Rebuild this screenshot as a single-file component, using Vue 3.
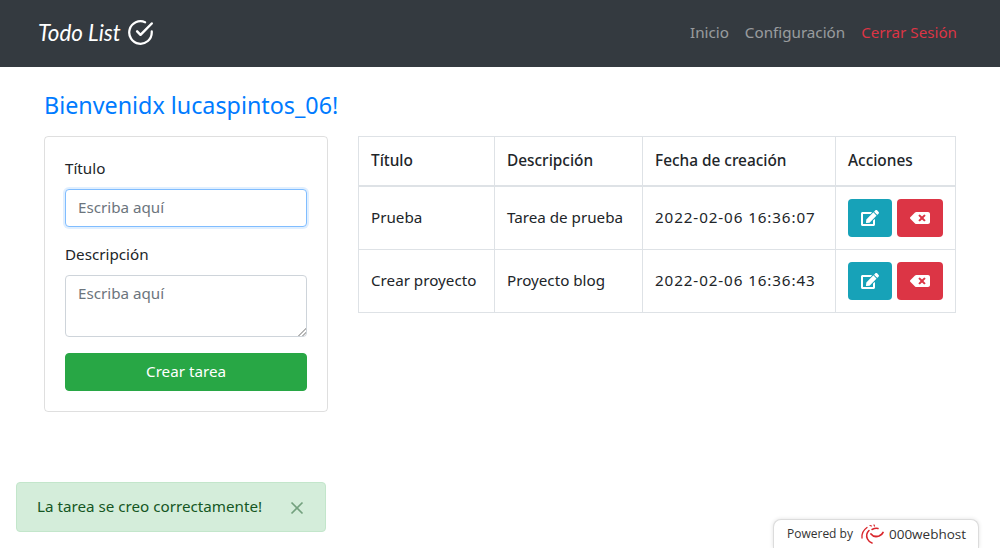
<script setup>
import { ref } from 'vue'

const tasks = ref([
  { id: 1, title: 'Prueba', description: 'Tarea de prueba', created: '2022-02-06 16:36:07' },
  { id: 2, title: 'Crear proyecto', description: 'Proyecto blog', created: '2022-02-06 16:36:43' },
])
const showToast = ref(true)
</script>

<template>
  <div class="page">
    <nav class="navbar">
      <a class="brand" href="#">
        <span class="brand-text">Todo List</span>
        <svg class="brand-icon" viewBox="0 0 24 24" fill="none" aria-hidden="true">
          <path d="M22 11.08V12a10 10 0 1 1-5.93-9.14" stroke="currentColor" stroke-width="2" stroke-linecap="round" stroke-linejoin="round" />
          <path d="M22 4 12 14.01l-3-3" stroke="currentColor" stroke-width="2.2" stroke-linecap="round" stroke-linejoin="round" />
        </svg>
      </a>
      <ul class="nav-links">
        <li><a href="#">Inicio</a></li>
        <li><a href="#">Configuración</a></li>
        <li><a class="logout" href="#">Cerrar Sesión</a></li>
      </ul>
    </nav>

    <main class="content">
      <h4 class="welcome">Bienvenidx lucaspintos_06!</h4>
      <div class="columns">
        <form class="card" @submit.prevent>
          <label for="title">Título</label>
          <input id="title" class="field focused" type="text" placeholder="Escriba aquí" />
          <label for="description">Descripción</label>
          <textarea id="description" class="field area" placeholder="Escriba aquí"></textarea>
          <button class="btn-create" type="submit">Crear tarea</button>
        </form>

        <table class="tasks">
          <thead>
            <tr>
              <th class="col-title">Título</th>
              <th class="col-desc">Descripción</th>
              <th class="col-date">Fecha de creación</th>
              <th>Acciones</th>
            </tr>
          </thead>
          <tbody>
            <tr v-for="task in tasks" :key="task.id">
              <td>{{ task.title }}</td>
              <td>{{ task.description }}</td>
              <td class="date">{{ task.created }}</td>
              <td class="action-cell">
                <div class="actions">
                  <button class="btn-icon edit" type="button" aria-label="Editar">
                    <svg viewBox="0 0 576 512" aria-hidden="true">
                      <path fill="currentColor" d="M402.6 83.2l90.2 90.2c3.8 3.8 3.8 10 0 13.8L274.4 405.6l-92.8 10.3c-12.4 1.4-22.9-9.1-21.5-21.5l10.3-92.8L388.8 83.2c3.8-3.8 10-3.8 13.8 0zm162-22.9l-48.8-48.8c-15.2-15.2-39.9-15.2-55.2 0l-35.4 35.4c-3.8 3.8-3.8 10 0 13.8l90.2 90.2c3.8 3.8 10 3.8 13.8 0l35.4-35.4c15.2-15.3 15.2-40 0-55.2zM384 346.2V448H64V128h229.8c3.2 0 6.2-1.3 8.5-3.5l40-40c7.6-7.6 2.2-20.5-8.5-20.5H48C21.5 64 0 85.5 0 112v352c0 26.5 21.5 48 48 48h352c26.5 0 48-21.5 48-48V306.2c0-10.7-12.9-16-20.5-8.5l-40 40c-2.2 2.3-3.5 5.3-3.5 8.5z" />
                    </svg>
                  </button>
                  <button class="btn-icon remove" type="button" aria-label="Eliminar">
                    <svg viewBox="0 0 640 512" aria-hidden="true">
                      <path fill="currentColor" d="M576 64H205.26A63.97 63.97 0 0 0 160 82.75L9.37 233.37c-12.5 12.5-12.5 32.76 0 45.25L160 429.25c12 12 28.28 18.75 45.25 18.75H576c35.35 0 64-28.65 64-64V128c0-35.35-28.65-64-64-64zm-84.69 254.06c6.25 6.25 6.25 16.38 0 22.63l-22.62 22.62c-6.25 6.25-16.38 6.25-22.63 0L384 301.25l-62.06 62.06c-6.25 6.25-16.38 6.25-22.63 0l-22.62-22.62c-6.25-6.25-6.25-16.38 0-22.63L338.75 256l-62.06-62.06c-6.25-6.25-6.25-16.38 0-22.63l22.62-22.62c6.25-6.25 16.38-6.25 22.63 0L384 210.75l62.06-62.06c6.25-6.25 16.38-6.25 22.63 0l22.62 22.62c6.25 6.25 6.25 16.38 0 22.63L429.25 256l62.06 62.06z" />
                    </svg>
                  </button>
                </div>
              </td>
            </tr>
          </tbody>
        </table>
      </div>
    </main>

    <div v-if="showToast" class="toast">
      <span class="toast-text">La tarea se creo correctamente!</span>
      <button class="toast-close" type="button" aria-label="Cerrar" @click="showToast = false">
        <svg viewBox="0 0 14 14" aria-hidden="true">
          <path d="M1.5 1.5l11 11M12.5 1.5l-11 11" stroke="currentColor" stroke-width="1.7" fill="none" />
        </svg>
      </button>
    </div>

    <div class="powered">
      <span>Powered by</span>
      <svg class="host-logo" viewBox="0 0 24 20" fill="none" aria-hidden="true">
        <path d="M7 3.5C3.5 6 1.5 10 2 14" stroke="#d9262c" stroke-width="1.3" stroke-linecap="round" />
        <path d="M9 6.5C6.5 9 6 12 7.5 15c1 2 2.5 3.5 4.5 4" stroke="#d9262c" stroke-width="1.6" stroke-linecap="round" />
        <path d="M11 10c2 2.5 5 3 8 2 1.5-.7 3.5-2 4-3.5" stroke="#d9262c" stroke-width="1.8" stroke-linecap="round" />
        <path d="M12 5.5c2-1 4-1.5 6-1" stroke="#d9262c" stroke-width="1.5" stroke-linecap="round" />
        <path d="M10 1.5l1.5.5M14 1l.5 1" stroke="#d9262c" stroke-width="1.2" stroke-linecap="round" />
      </svg>
      <span class="host-name">000webhost</span>
    </div>
  </div>
</template>

<style scoped>
.page {
  position: relative;
  height: 548px;
  overflow: hidden;
  background: #fff;
  color: #212529;
  font-family: "Noto Sans", Lato, sans-serif;
  font-size: 15.2px;
  line-height: 24px;
}

.navbar {
  height: 67px;
  box-sizing: border-box;
  padding: 0 43px 0 38px;
  display: flex;
  align-items: center;
  justify-content: space-between;
  background: #343a40;
}

.brand {
  display: flex;
  align-items: center;
  gap: 6px;
  margin-bottom: 2px;
  color: #fff;
  text-decoration: none;
}

.brand-text {
  font-family: Lato, sans-serif;
  font-style: italic;
  font-size: 22.4px;
  white-space: nowrap;
}

.brand-icon {
  width: 27px;
  height: 27px;
}

.nav-links {
  display: flex;
  gap: 16px;
  margin: 0 0 3px;
  padding: 0;
  list-style: none;
}

.nav-links a {
  color: rgba(255, 255, 255, 0.5);
  text-decoration: none;
}

.nav-links a.logout {
  color: #dc3545;
}

.content {
  padding: 24px 44px 0;
}

.welcome {
  margin: 0 0 16px;
  color: #007bff;
  font-size: 23.3px;
  font-weight: 400;
  line-height: 29px;
}

.columns {
  display: flex;
  align-items: flex-start;
  gap: 30px;
}

.card {
  width: 284px;
  box-sizing: border-box;
  padding: 20px;
  display: flex;
  flex-direction: column;
  border: 1px solid rgba(0, 0, 0, 0.125);
  border-radius: 4px;
}

.card label {
  margin: -1px 0 9px;
}

.field {
  height: 38px;
  margin-bottom: 16px;
  padding: 5px 12px 7px;
  box-sizing: border-box;
  border: 1px solid #ced4da;
  border-radius: 4px;
  color: #495057;
  font: inherit;
  outline: none;
}

.field::placeholder {
  color: #6c757d;
  opacity: 1;
}

.field.focused {
  border-color: #80bdff;
  box-shadow: 0 0 0 2px rgba(0, 123, 255, 0.12);
}

.area {
  height: 62px;
  resize: vertical;
}

.area::-webkit-resizer {
  background: linear-gradient(135deg, transparent 50%, #b5b5b5 50%, #b5b5b5 62%, transparent 62%, transparent 74%, #b5b5b5 74%, #b5b5b5 88%, transparent 88%) no-repeat right bottom / 9px 9px;
}

.btn-create {
  height: 38px;
  padding: 0 0 2px;
  border: 1px solid #28a745;
  border-radius: 4px;
  background: #28a745;
  color: #fff;
  font: inherit;
  cursor: pointer;
}

.tasks {
  flex: 1;
  border-collapse: collapse;
  table-layout: fixed;
}

.tasks th,
.tasks td {
  box-sizing: border-box;
  padding: 11px 12px 13px;
  border: 1px solid #dee2e6;
  text-align: left;
  vertical-align: middle;
  font-weight: 400;
  white-space: nowrap;
}

.tasks th {
  padding: 12px;
  font-size: 15.4px;
  font-weight: 500;
  border-bottom-width: 2px;
}

.tasks td.action-cell {
  padding: 12px;
}

.tasks td.date {
  letter-spacing: 0.9px;
}

.col-title {
  width: 136px;
}

.col-desc {
  width: 148px;
}

.col-date {
  width: 193px;
}

.actions {
  display: flex;
  gap: 5px;
}

.btn-icon {
  height: 38px;
  padding: 0;
  display: flex;
  align-items: center;
  justify-content: center;
  border: none;
  border-radius: 4px;
  color: #fff;
  cursor: pointer;
}

.btn-icon svg {
  height: 16px;
}

.edit {
  width: 44px;
  background: #17a2b8;
}

.edit svg {
  width: 18px;
}

.remove {
  width: 46px;
  background: #dc3545;
}

.remove svg {
  width: 20px;
}

.toast {
  position: absolute;
  left: 16px;
  bottom: 16px;
  width: 310px;
  height: 50px;
  padding: 0 20px;
  box-sizing: border-box;
  display: flex;
  align-items: center;
  justify-content: space-between;
  border: 1px solid #c3e6cb;
  border-radius: 4px;
  background: #d4edda;
  color: #155724;
}

.toast-text {
  padding-bottom: 2px;
}

.toast-close {
  width: 14px;
  height: 14px;
  margin-top: 2px;
  margin-right: 1px;
  padding: 0;
  border: none;
  background: none;
  color: #155724;
  opacity: 0.5;
  cursor: pointer;
}

.toast-close svg {
  display: block;
  width: 14px;
  height: 14px;
}

.powered {
  position: absolute;
  right: 21px;
  bottom: 0;
  width: 206px;
  height: 29px;
  padding: 0 12px 0 13px;
  box-sizing: border-box;
  display: flex;
  align-items: center;
  white-space: nowrap;
  border: 1px solid #dcdcdc;
  border-bottom: none;
  border-radius: 8px 8px 0 0;
  background: #fff;
  box-shadow: 0 0 4px rgba(0, 0, 0, 0.12);
  color: #333;
  font-family: "Open Sans", sans-serif;
  font-size: 12px;
}

.host-logo {
  flex: none;
  width: 24px;
  height: 20px;
  margin: 0 5px 0 7px;
}

.host-name {
  font-size: 13.5px;
}
</style>

<style>
body {
  margin: 0;
}
</style>
